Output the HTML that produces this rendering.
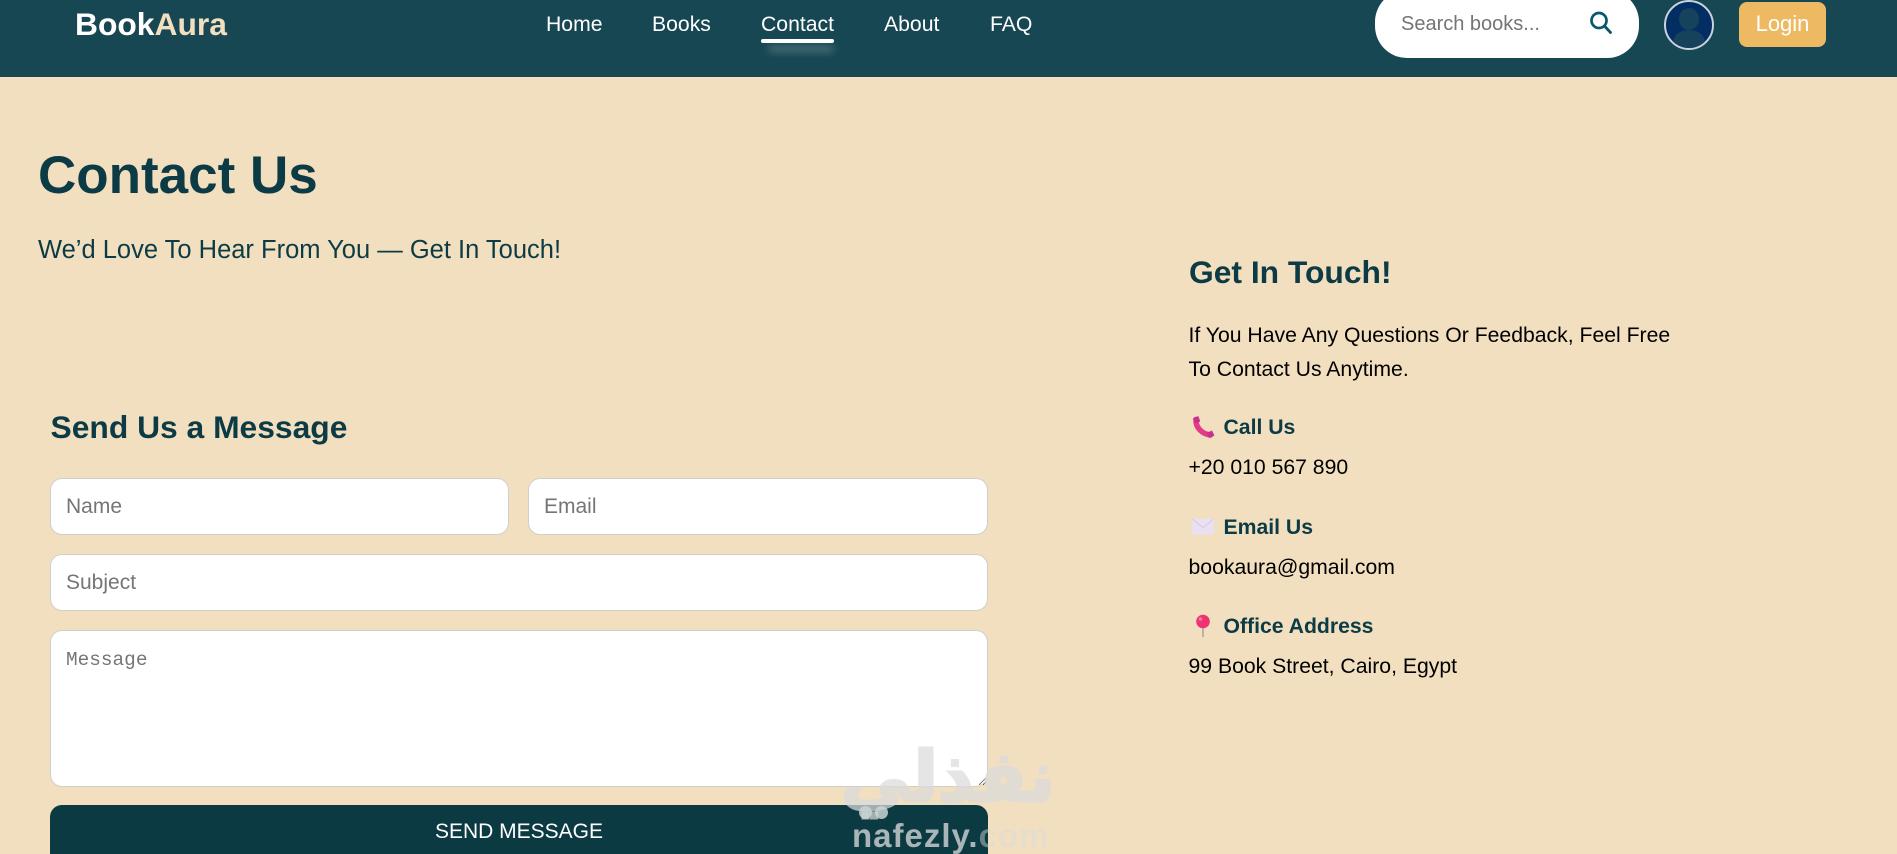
<!DOCTYPE html>
<html lang="en">
<head>
<meta charset="utf-8">
<title>BookAura - Contact</title>
<style>
html,body{margin:0;padding:0;width:1897px;height:854px;overflow:hidden;background:#f1dfbf;font-family:"Liberation Sans",Arial,sans-serif}
#page{position:absolute;left:0;top:0;width:1897px;height:854px;overflow:hidden}
.t{position:absolute;white-space:nowrap;margin:0}
#hd{position:absolute;left:0;top:0;width:1897px;height:77px;background:#174753}
.nav{color:#fff;font-size:21.2px;line-height:30px;top:10px}
input,textarea{position:absolute;box-sizing:border-box;background:#fff;border:1px solid #cfcfc9;border-radius:12px;font-family:"Liberation Sans",Arial,sans-serif;font-size:21px;padding:0 15px;margin:0;outline:none}
textarea{font-family:"Liberation Mono",monospace;font-size:19.4px;padding:17px 15px 15px;line-height:24px}
::placeholder{color:#757575;opacity:1}
.h3{color:#0c3b45;font-size:21.2px;font-weight:700;line-height:28px;left:1223.5px}
.v{color:#000;font-size:21.2px;line-height:30px;left:1188.5px}
</style>
</head>
<body>
<div id="page">
<div id="hd"></div>
<div class="t" style="left:75px;top:6px;font-size:31.8px;line-height:36px;font-weight:700;color:#fff">Book<span style="color:#f1dfbf">Aura</span></div>
<div class="t nav" style="left:546px">Home</div>
<div class="t nav" style="left:652px">Books</div>
<div class="t nav" style="left:761px">Contact</div>
<div class="t nav" style="left:884px">About</div>
<div class="t nav" style="left:990px">FAQ</div>
<div style="position:absolute;left:768px;top:46px;width:66px;height:6px;border-radius:3px;background:rgba(255,255,255,.24);filter:blur(4px)"></div>
<div style="position:absolute;left:761px;top:39px;width:73px;height:4px;border-radius:2px;background:#fff"></div>

<div style="position:absolute;left:1375px;top:-10px;width:264px;height:68px;border-radius:32px;background:#fff"></div>
<div class="t" style="left:1401px;top:10px;font-size:20px;line-height:28px;color:#757575">Search books...</div>
<svg style="position:absolute;left:1589px;top:10px" width="24" height="26" viewBox="0 0 24 26"><circle cx="10" cy="10.500" r="7.500" fill="none" stroke="#05596b" stroke-width="2.700"/><path d="M15.500 16l6 6.500" stroke="#05596b" stroke-width="2.800" stroke-linecap="round"/></svg>

<svg style="position:absolute;left:1664px;top:0" width="50" height="50" viewBox="0 0 50 50"><defs><clipPath id="c"><circle cx="25" cy="25" r="23"/></clipPath></defs><circle cx="25" cy="25" r="24" fill="#032e63" stroke="#c8d3dd" stroke-width="2"/><g clip-path="url(#c)" fill="#17425d"><ellipse cx="25" cy="19" rx="10" ry="11"/><ellipse cx="25" cy="41" rx="15.500" ry="11"/></g></svg>

<div style="position:absolute;left:1739px;top:2px;width:87px;height:45px;border-radius:8px;background:#edb962;color:#fff;font-size:22px;line-height:44px;text-align:center">Login</div>

<h1 class="t" style="left:38px;top:143px;font-size:53px;line-height:66px;font-weight:700;color:#0c3b45">Contact Us</h1>
<div class="t" style="left:38px;top:233px;font-size:25.500px;line-height:34px;color:#0c3b45">We’d Love To Hear From You — Get In Touch!</div>

<h2 class="t" style="left:50.500px;top:407px;font-size:31.800px;line-height:40px;font-weight:700;color:#0c3b45">Send Us a Message</h2>
<input style="left:50px;top:478px;width:459px;height:57px" placeholder="Name">
<input style="left:528px;top:478px;width:460px;height:57px" placeholder="Email">
<input style="left:50px;top:554px;width:938px;height:57px" placeholder="Subject">
<textarea style="left:50px;top:630px;width:938px;height:157px" placeholder="Message"></textarea>
<div style="position:absolute;left:50px;top:805px;width:938px;height:49px;border-radius:12px 12px 0 0;background:#0c3a43;color:#fff;font-size:21px;line-height:53px;text-align:center">SEND MESSAGE</div>

<h2 class="t" style="left:1189px;top:253px;font-size:31.800px;line-height:38px;font-weight:700;color:#0c3b45">Get In Touch!</h2>
<div class="t v" style="top:321px">If You Have Any Questions Or Feedback, Feel Free</div>
<div class="t v" style="top:355px">To Contact Us Anytime.</div>

<svg style="position:absolute;left:1191px;top:415px" width="24" height="24" viewBox="0 0 24 24"><path d="M5 4.500C4.500 12 10.500 19 19.500 20" fill="none" stroke="#e23c86" stroke-width="5.500" stroke-linecap="round"/><path d="M1.800 3.500l5.500-2.500 2 5.500-5 2zM15.500 18l5.500-2.500 2.500 5-5.500 2.500z" fill="#c9318f"/></svg>
<div class="t h3" style="top:414px">Call Us</div>
<div class="t v" style="top:453px">+20 010 567 890</div>

<svg style="position:absolute;left:1192px;top:518px" width="22" height="17" viewBox="0 0 22 17"><rect x="0" y="0.500" width="22" height="16" rx="1.500" fill="#e9e0f1"/><path d="M0.500 1l10.500 8.500L21.500 1" fill="none" stroke="#d6cce4" stroke-width="1.100"/></svg>
<div class="t h3" style="top:514px">Email Us</div>
<div class="t v" style="top:553px">bookaura@gmail.com</div>

<svg style="position:absolute;left:1194px;top:614px" width="18" height="24" viewBox="0 0 18 24"><rect x="8.200" y="12" width="1.600" height="11" fill="#b5a2a8"/><circle cx="9" cy="7.500" r="6.800" fill="#ee3272"/><circle cx="6.500" cy="5" r="1.800" fill="#f77fa6"/></svg>
<div class="t h3" style="top:613px">Office Address</div>
<div class="t v" style="top:652px">99 Book Street, Cairo, Egypt</div>

<div class="t" dir="rtl" style="left:843px;top:732px;width:212px;text-align:center;font-family:'DejaVu Sans',sans-serif;font-size:70px;line-height:90px;font-weight:700;color:#dcdcdc;-webkit-text-stroke:3px #dcdcdc;opacity:.72">نفذلي</div>
<div style="position:absolute;left:859px;top:806px;width:13px;height:13px;border-radius:50%;background:rgba(205,212,212,.85)"></div>
<div style="position:absolute;left:875px;top:806px;width:13px;height:13px;border-radius:50%;background:rgba(205,212,212,.85)"></div>
<div class="t" style="left:852px;top:816px;font-size:33px;line-height:40px;font-weight:700;letter-spacing:1px;color:rgba(220,220,220,.76)">nafezly.<span style="opacity:.6">com</span></div>
</div>
</body>
</html>
